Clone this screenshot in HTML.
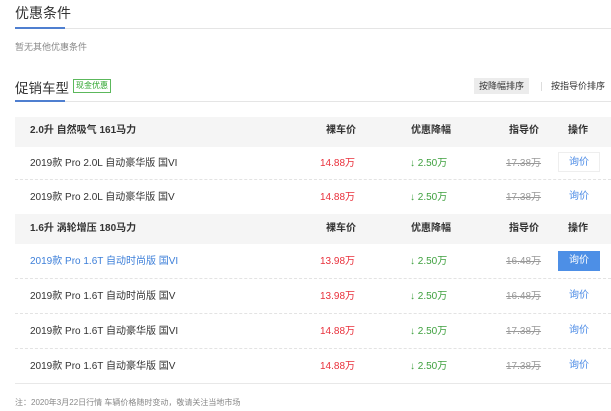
<!DOCTYPE html>
<html><head><meta charset="utf-8"><style>
*{margin:0;padding:0;box-sizing:border-box}
body{width:611px;height:411px;background:#fff;font-family:"Liberation Sans","Noto Sans CJK SC",sans-serif;color:#333;position:relative;overflow:hidden}
.a{position:absolute;white-space:nowrap}
.line{position:absolute;left:15px;right:0;height:1px;background:#e5e5e5}
.blue{position:absolute;left:15px;width:50px;height:2px;background:#4f7fd0}
.gh{position:absolute;left:15px;right:0;background:#f5f5f5;height:30px;font-size:10px;font-weight:bold;color:#333}
.row{position:absolute;left:15px;right:0;height:35px;font-size:10px;border-bottom:1px dashed #e3e3e3}
.c{position:absolute;top:0;line-height:inherit}
.red{color:#e9303b}.grn{color:#3ea03e}.del{color:#999;text-decoration:line-through}
.btn{position:absolute;left:543px;width:42px;height:20px;line-height:20px;text-align:center;color:#4a8ae6}
</style></head><body>
<div class="a" style="left:15px;top:3px;font-size:14px;color:#333">优惠条件</div>
<div class="line" style="top:28px"></div><div class="blue" style="top:27px"></div>
<div class="a" style="left:15px;top:40px;font-size:9px;color:#888">暂无其他优惠条件</div>
<div class="a" style="left:15px;top:77px;font-size:13.5px;color:#333">促销车型</div>
<div class="a" style="left:73px;top:79px;font-size:8px;color:#2ea52e;border:1px solid #5cb85c;padding:1px 2px;line-height:10px">现金优惠</div>
<div class="line" style="top:101px"></div><div class="blue" style="top:100px"></div>
<div class="a" style="left:474px;top:78px;background:#ececec;font-size:9px;padding:0 5px;line-height:16px;color:#333">按降幅排序</div>
<div class="a" style="left:541px;top:82px;width:1px;height:9px;background:#ddd"></div>
<div class="a" style="left:551px;top:78px;font-size:9px;line-height:16px;color:#333">按指导价排序</div>

<div class="gh" style="top:117px;line-height:28px">
<span class="c" style="left:15px">2.0升 自然吸气 161马力</span>
<span class="c" style="left:311px">裸车价</span><span class="c" style="left:396px">优惠降幅</span>
<span class="c" style="left:494px">指导价</span><span class="c" style="left:553px">操作</span></div>
<div class="row" style="top:145px;line-height:37px"><span class="c" style="left:15px">2019款 Pro 2.0L 自动豪华版 国VI</span>
<span class="c red" style="left:305px">14.88万</span><span class="c grn" style="left:395px">↓ 2.50万</span><span class="c del" style="left:491px">17.38万</span>
<span class="btn" style="top:7px;border:1px solid #eee">询价</span></div>
<div class="row" style="top:180px;line-height:35px"><span class="c" style="left:15px">2019款 Pro 2.0L 自动豪华版 国V</span>
<span class="c red" style="left:305px">14.88万</span><span class="c grn" style="left:395px">↓ 2.50万</span><span class="c del" style="left:491px">17.38万</span>
<span class="btn" style="top:7px">询价</span></div>

<div class="gh" style="top:214px;line-height:30px">
<span class="c" style="left:15px">1.6升 涡轮增压 180马力</span>
<span class="c" style="left:311px">裸车价</span><span class="c" style="left:396px">优惠降幅</span>
<span class="c" style="left:494px">指导价</span><span class="c" style="left:553px">操作</span></div>
<div class="row" style="top:244px;line-height:35px"><span class="c" style="left:15px;color:#3d7fd9">2019款 Pro 1.6T 自动时尚版 国VI</span>
<span class="c red" style="left:305px">13.98万</span><span class="c grn" style="left:395px">↓ 2.50万</span><span class="c del" style="left:491px">16.48万</span>
<span class="btn" style="top:7px;background:#4d8fe6;color:#fff">询价</span></div>
<div class="row" style="top:279px;line-height:35px"><span class="c" style="left:15px">2019款 Pro 1.6T 自动时尚版 国V</span>
<span class="c red" style="left:305px">13.98万</span><span class="c grn" style="left:395px">↓ 2.50万</span><span class="c del" style="left:491px">16.48万</span>
<span class="btn" style="top:7px">询价</span></div>
<div class="row" style="top:314px;line-height:35px"><span class="c" style="left:15px">2019款 Pro 1.6T 自动豪华版 国VI</span>
<span class="c red" style="left:305px">14.88万</span><span class="c grn" style="left:395px">↓ 2.50万</span><span class="c del" style="left:491px">17.38万</span>
<span class="btn" style="top:7px">询价</span></div>
<div class="row" style="top:349px;line-height:35px;border-bottom:1px solid #e8e8e8"><span class="c" style="left:15px">2019款 Pro 1.6T 自动豪华版 国V</span>
<span class="c red" style="left:305px">14.88万</span><span class="c grn" style="left:395px">↓ 2.50万</span><span class="c del" style="left:491px">17.38万</span>
<span class="btn" style="top:7px">询价</span></div>
<div class="a" style="left:15px;top:397px;font-size:8px;color:#888">注：2020年3月22日行情 车辆价格随时变动，敬请关注当地市场</div>
</body></html>
